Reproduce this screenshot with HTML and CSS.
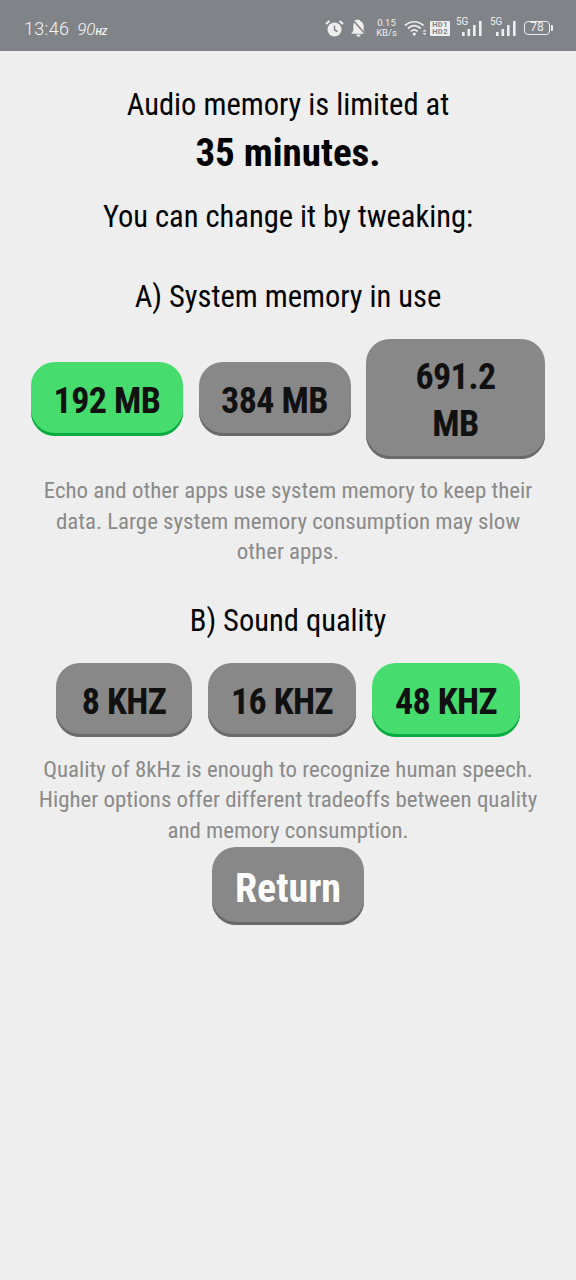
FILE: index.html
```html
<!DOCTYPE html>
<html lang="en">
<head>
<meta charset="utf-8">
<title>Audio memory</title>
<link rel="stylesheet" href="styles.css">
</head>
<body>
<header class="status">
  <div class="status-left"><span class="time">13:46</span><span class="hz">90<small>HZ</small></span></div>
  <div class="status-right">
    <svg class="ic alarm" width="19" height="19" viewBox="0 0 19 19"><circle cx="9.500" cy="10.500" r="7" fill="#eee"/><path d="M9.500 6.500V11L12.500 12.500" stroke="#808387" stroke-width="1.400" fill="none"/><path d="M1 5L4.500 2M18 5L14.500 2" stroke="#eee" stroke-width="2.200" fill="none"/></svg>
    <svg class="ic bell" width="17" height="18" viewBox="0 0 17 18"><path d="M8.500 0.500a1.500 1.500 0 0 1 1.500 1.500c2.700.8 3.700 3.200 3.700 5.500V12l2.300 2.800H1L3.300 12V7.500c0-2 .2-3 1-3.800L2.500 1.500zM6.300 15.500h4.400a2.200 2.200 0 0 1-4.400 0z" fill="#eee"/><path d="M2.500 0.500L16 16" stroke="#808387" stroke-width="1.600"/></svg>
    <span class="speed"><span>0.15</span><span>KB/s</span></span>
    <svg class="ic wifi" width="23" height="16" viewBox="0 0 23 16"><path d="M1 5.500C6.500.5 14 .5 19.500 5.500M3.800 8.500C8 4.700 12.500 4.700 16.700 8.500M6.800 11.300C9 9.500 11.500 9.500 13.700 11.300" stroke="#eee" stroke-width="1.700" fill="none"/><circle cx="10.300" cy="14" r="1.600" fill="#eee"/><path d="M18.500 11.500l2-2 2 2zM18.500 13l2 2 2-2z" fill="#eee"/></svg>
    <span class="hd"><span>HD1</span><span>HD2</span></span>
    <span class="sig"><i class="five">5G</i><svg width="22" height="16" viewBox="0 0 22 16"><rect x="1" y="11" width="2.600" height="4" fill="#eee"/><rect x="6.500" y="8" width="2.600" height="7" fill="#eee"/><rect x="12" y="4" width="2.600" height="11" fill="#eee"/><rect x="18" y="0" width="2.600" height="15" fill="#eee"/></svg></span>
    <span class="sig"><i class="five">5G</i><svg width="22" height="16" viewBox="0 0 22 16"><rect x="1" y="11" width="2.600" height="4" fill="#eee"/><rect x="6.500" y="8" width="2.600" height="7" fill="#eee"/><rect x="12" y="4" width="2.600" height="11" fill="#eee"/><rect x="18" y="0" width="2.600" height="15" fill="#eee"/></svg></span>
    <span class="batt"><span class="batt-body">78</span><i class="batt-tip"></i></span>
  </div>
</header>
<main class="page">
  <p class="lead">Audio memory is limited at</p>
  <p class="big">35 minutes.</p>
  <p class="lead tweak">You can change it by tweaking:</p>
  <h2 class="head first">A) System memory in use</h2>
  <div class="row row-a">
    <button class="btn on w152">192 MB</button>
    <button class="btn w152">384 MB</button>
    <button class="btn tall">691.2 MB</button>
  </div>
  <p class="note note-a">Echo and other apps use system memory to keep their data. Large system memory consumption may slow other apps.</p>
  <h2 class="head second">B) Sound quality</h2>
  <div class="row row-b">
    <button class="btn w136">8 KHZ</button>
    <button class="btn w148">16 KHZ</button>
    <button class="btn on w148">48 KHZ</button>
  </div>
  <p class="note note-b">Quality of 8kHz is enough to recognize human speech. Higher options offer different tradeoffs between quality and memory consumption.</p>
  <button class="btn ret">Return</button>
</main>
</body>
</html>
```
FILE: styles.css
```css
* { box-sizing: border-box; }
html, body { margin: 0; height: 100%; }
body { background: #eeeeee; font-family: "Roboto Condensed", Roboto, sans-serif; color: #000; width: 576px; height: 1280px; overflow: hidden; }
.status { height: 51px; background: #808387; color: #eee; display: flex; justify-content: space-between; align-items: center; padding: 6px 23px 1px 24px; font-family: Roboto, sans-serif; }
.status-left { display: flex; align-items: baseline; gap: 8px; }
.time { font-size: 18px; font-weight: 300; letter-spacing: .3px; color: #f4f4f4; }
.hz { font-size: 17px; font-style: italic; font-weight: 300; color: #f4f4f4; }
.hz small { font-size: 9px; font-weight: 700; }
.status-right { display: flex; align-items: center; }
.ic { display: block; }
.bell { margin-left: 6px; }
.speed { display: flex; flex-direction: column; font-size: 9.500px; line-height: 10px; align-items: center; margin-left: 9px; width: 21px; }
.wifi { margin-left: 7px; }
.hd { display: flex; flex-direction: column; background: #eee; color: #808387; font-size: 7.500px; line-height: 7px; font-weight: 700; padding: 0 2px; height: 15px; justify-content: center; letter-spacing: .4px; border-radius: 1px; margin-left: 3px; width: 20px; align-items: center; }
.sig { position: relative; display: block; width: 27px; height: 18px; margin-left: 6px; }
.sig + .sig { margin-left: 7px; }
.sig svg { display: block; position: absolute; right: 0; bottom: 0; }
.five { position: absolute; left: 0; top: -2px; font-style: normal; font-size: 10px; line-height: 10px; }
.batt { display: flex; align-items: center; gap: 1px; margin-left: 7px; }
.batt-body { width: 26px; height: 14px; border: 1.500px solid #eee; border-radius: 4px; font-size: 12px; line-height: 11px; text-align: center; }
.batt-tip { width: 2px; height: 6px; background: #eee; border-radius: 0 1px 1px 0; }
.page { display: flex; flex-direction: column; align-items: center; }
p, h2 { margin: 0; text-align: center; font-weight: 400; }
.lead { font-size: 30.500px; line-height: 36px; margin-top: 36px; white-space: nowrap; }
.big { font-size: 39px; font-weight: 700; line-height: 44px; margin-top: 8px; white-space: nowrap; }
.tweak { margin-top: 24px; }
.head { font-size: 30.500px; line-height: 36px; white-space: nowrap; }
.first { margin-top: 44px; }
.second { margin-top: 35px; }
.row { display: flex; gap: 16px; align-items: center; justify-content: center; }
.row-a { margin-top: 24px; gap: 15.500px; }
.row-b { margin-top: 24px; }
.btn { font: 700 36px/47px "Roboto Condensed", Roboto, sans-serif; letter-spacing: -.6px; border: 0; background: #888888; color: #111; border-radius: 24px; box-shadow: inset 0 -3px 0 #6a6a6a; padding: 5px 0 0; height: 74px; }
.on { background: #47dc6e; box-shadow: inset 0 -3px 0 #0aaa40; }
.w152 { width: 152px; }
.w136 { width: 136px; }
.w148 { width: 148px; }
.tall { width: 179px; height: 120px; padding: 3px 30px 0; }
.note { font-size: 22.900px; line-height: 30.500px; color: #8a8a8a; width: 576px; padding: 0 36px; }
.note-a { margin-top: 17px; }
.note-b { margin-top: 18px; }
.ret { width: 152px; height: 78px; color: #fff; font-size: 40px; letter-spacing: 0; padding-top: 5px; margin-top: 1px; }
```
